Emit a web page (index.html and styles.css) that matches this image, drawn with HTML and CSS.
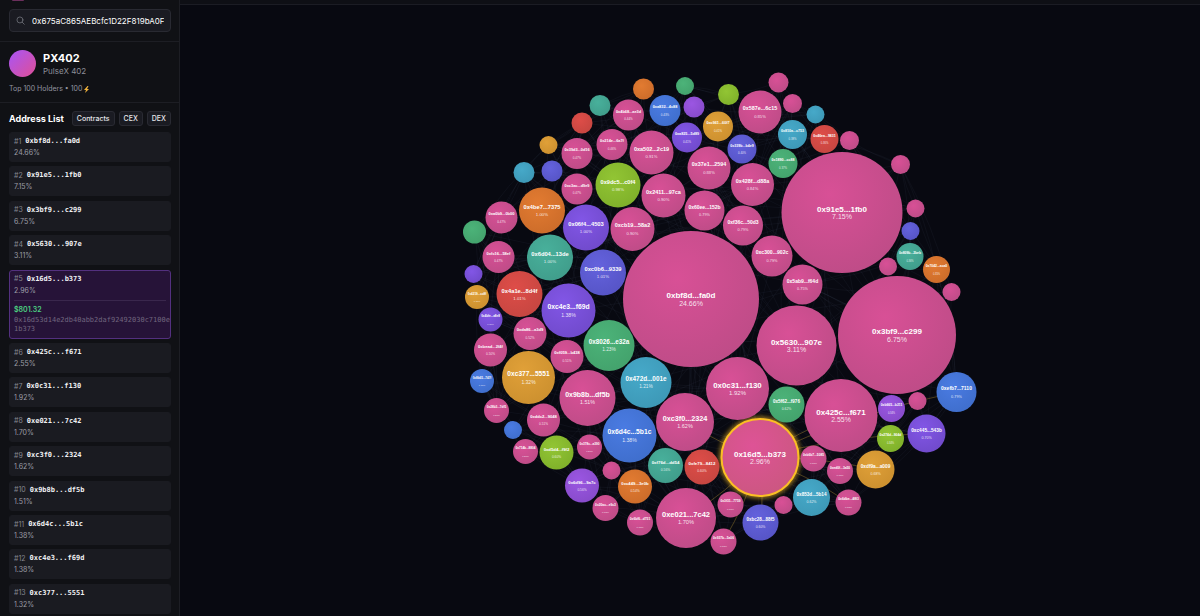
FILE: index.html
```html
<!DOCTYPE html>
<html lang="en">
<head>
<meta charset="utf-8">
<title>PX402 holders map</title>
<link rel="stylesheet" href="styles.css">
</head>
<body>
<aside class="sidebar">
  <div class="brand"><span class="brand-mark"></span></div>
  <div class="search-section">
    <label class="search">
      <svg class="search-icon" viewBox="0 0 24 24" aria-hidden="true"><circle cx="10.5" cy="10.5" r="8"/><path d="M16.5 16.5 22 22"/></svg>
      <input class="search-input" type="text" aria-label="Token address" value="0x675aC865AEBcfc1D22F819bA0Fe6A60bC17D3EB2">
    </label>
  </div>
  <section class="token">
    <div class="token-row">
      <span class="avatar"></span>
      <div>
        <h1 class="token-name">PX402</h1>
        <p class="token-sub">PulseX 402</p>
      </div>
    </div>
    <p class="token-meta">Top 100 Holders • 100
      <svg class="bolt" viewBox="0 0 12 14" aria-hidden="true"><path d="M8 0 1 8h4L3 14l8-8H7L10 0z"/></svg>
    </p>
  </section>
  <div class="list-head">
    <h2 class="list-title">Address List</h2>
    <button class="chip" type="button">Contracts</button>
    <button class="chip" type="button">CEX</button>
    <button class="chip" type="button">DEX</button>
  </div>
  <ol class="list">
    <li class="card"><div class="line"><span class="rank">#1</span><span class="addr">0xbf8d...fa0d</span></div><div class="share">24.66%</div></li>
    <li class="card"><div class="line"><span class="rank">#2</span><span class="addr">0x91e5...1fb0</span></div><div class="share">7.15%</div></li>
    <li class="card"><div class="line"><span class="rank">#3</span><span class="addr">0x3bf9...c299</span></div><div class="share">6.75%</div></li>
    <li class="card"><div class="line"><span class="rank">#4</span><span class="addr">0x5630...907e</span></div><div class="share">3.11%</div></li>
    <li class="card selected"><div class="line"><span class="rank">#5</span><span class="addr">0x16d5...b373</span></div><div class="share">2.96%</div>
      <div class="detail"><div class="usd">$801.32</div><div class="full">0x16d53d14e2db40abb2daf92492030c7100e1b373</div></div></li>
    <li class="card"><div class="line"><span class="rank">#6</span><span class="addr">0x425c...f671</span></div><div class="share">2.55%</div></li>
    <li class="card"><div class="line"><span class="rank">#7</span><span class="addr">0x0c31...f130</span></div><div class="share">1.92%</div></li>
    <li class="card"><div class="line"><span class="rank">#8</span><span class="addr">0xe021...7c42</span></div><div class="share">1.70%</div></li>
    <li class="card"><div class="line"><span class="rank">#9</span><span class="addr">0xc3f0...2324</span></div><div class="share">1.62%</div></li>
    <li class="card"><div class="line"><span class="rank">#10</span><span class="addr">0x9b8b...df5b</span></div><div class="share">1.51%</div></li>
    <li class="card"><div class="line"><span class="rank">#11</span><span class="addr">0x6d4c...5b1c</span></div><div class="share">1.38%</div></li>
    <li class="card"><div class="line"><span class="rank">#12</span><span class="addr">0xc4e3...f69d</span></div><div class="share">1.38%</div></li>
    <li class="card"><div class="line"><span class="rank">#13</span><span class="addr">0xc377...5551</span></div><div class="share">1.32%</div></li>
  </ol>
</aside>
<main class="stage">
  <div class="topbar"></div>
  <svg class="map" id="map" viewBox="180 5 1020 611" role="img" aria-label="Bubble map of token holders"></svg>
</main>
<script src="map.js"></script>
</body>
</html>
```
FILE: styles.css
```css
* { box-sizing: border-box; }
body {
  margin: 0;
  height: 100vh;
  display: flex;
  overflow: hidden;
  background: #080911;
  color: #fff;
  font-family: Inter, "Liberation Sans", sans-serif;
}
h1, h2, p, ol { margin: 0; padding: 0; }
.sidebar {
  flex: 0 0 180px;
  display: flex;
  flex-direction: column;
  background: #101115;
  border-right: 1px solid #1d1e24;
}
.brand { height: 1px; padding-left: 12px; }
.brand-mark { display: block; width: 12px; height: 1px; border-radius: 0 0 4px 4px; background: #6b2f5c; }
.search-section { padding: 8px 8px 9px 9px; border-bottom: 1px solid #1d1e24; }
.search {
  height: 23px;
  display: flex;
  align-items: center;
  gap: 7px;
  padding: 0 6px;
  background: #1a1b22;
  border: 1px solid #292a32;
  border-radius: 4px;
}
.search-icon { flex: none; width: 9px; height: 9px; fill: none; stroke: #777982; stroke-width: 2; stroke-linecap: round; }
.search-input {
  flex: 1;
  min-width: 0;
  padding: 0;
  border: 0;
  outline: 0;
  background: none;
  color: #fff;
  font: 400 8px/12px Inter, sans-serif;
}
.token { padding: 8px 9px 8px; border-bottom: 1px solid #1d1e24; }
.token-row { display: flex; align-items: center; gap: 7px; }
.avatar { width: 27px; height: 27px; border-radius: 50%; background: linear-gradient(135deg, #a855f7, #df4f96); }
.token-name { font-size: 11px; line-height: 14px; font-weight: 700; }
.token-sub { font-size: 8px; line-height: 12px; color: #8d8f98; }
.token-meta { display: flex; align-items: center; gap: 1px; margin-top: 7px; font-size: 7px; line-height: 10px; color: #9395a0; }
.bolt { width: 7px; height: 7px; fill: #f3b43c; }
.list-head { display: flex; align-items: center; gap: 4px; padding: 8px 8px 6px 9px; }
.list-title { flex: 1; white-space: nowrap; font-size: 9px; line-height: 15px; font-weight: 700; }
.chip {
  height: 15px;
  padding: 0 4px;
  border: 1px solid #292a32;
  border-radius: 3px;
  background: #1a1b22;
  color: #e6e6ea;
  font: 500 7px/12px Inter, sans-serif;
}
.list {
  flex: 1;
  min-height: 0;
  display: flex;
  flex-direction: column;
  justify-content: space-between;
  padding: 0 8px 2px 9px;
  list-style: none;
  overflow-y: auto;
  scrollbar-width: none;
}
.card {
  flex: none;
  padding: 2px 4px 3px;
  border: 1px solid #1a1b21;
  border-radius: 3px;
  background: #1a1b21;
}
.line { display: flex; align-items: center; gap: 4px; height: 12px; }
.rank { font-size: 7px; color: #858790; }
.addr { font: 700 7px/12px "DejaVu Sans Mono", monospace; color: #f1f1f4; }
.share { font-size: 7px; line-height: 11px; color: #9c9ea7; }
.selected { background: #261338; border-color: #53307f; }
.detail { margin-top: 4px; padding: 4px 0 1px; border-top: 1px solid #3a274d; }
.usd { font-size: 7px; line-height: 10px; font-weight: 600; color: #4cd080; }
.full { margin-right: -4px; font: 7px/9px "DejaVu Sans Mono", monospace; color: #71667f; word-break: break-all; padding-top: 1px; }
.stage { flex: 1; min-width: 0; display: flex; flex-direction: column; }
.topbar { height: 5px; flex: none; background: #0e0f15; border-bottom: 1px solid #1b1c24; }
.map { flex: 1; min-height: 0; width: 100%; font-family: "Liberation Sans", Arial, sans-serif; }
.link { fill: none; stroke: #7c8cb0; stroke-opacity: 0.06; }
.link-active { fill: none; stroke: #e8b83a; stroke-opacity: 0.3; }
.bubble-label { fill: #fff; font-weight: 700; text-anchor: middle; }
.bubble-share { fill: #fff; fill-opacity: 0.85; text-anchor: middle; }
.halo { fill: none; stroke: #fbbf24; stroke-opacity: 0.6; stroke-width: 5; filter: url(#glow); }
.ring { fill: none; stroke: #fbbf24; stroke-width: 2; }
```
FILE: map.js
```javascript
// [x, y, radius, colour, label, share]
const holders = [
  [760, 457.5, 38.5, "sel", "0x16d5...b373", "2.96%"],
  [691, 299, 68, "pink", "0xbf8d...fa0d", "24.66%"],
  [842, 212.5, 60.5, "pink", "0x91e5...1fb0", "7.15%"],
  [897, 335, 59, "pink", "0x3bf9...c299", "6.75%"],
  [796.5, 345.5, 40, "pink", "0x5630...907e", "3.11%"],
  [841, 415.5, 36.5, "pink", "0x425c...f671", "2.55%"],
  [737.5, 388.5, 31.5, "pink", "0x0c31...f130", "1.92%"],
  [686, 518, 30, "pink", "0xe021...7c42", "1.70%"],
  [685, 422, 29, "pink", "0xc3f0...2324", "1.62%"],
  [587.5, 398, 28, "pink", "0x9b8b...df5b", "1.51%"],
  [629.5, 435.5, 27, "blue", "0x6d4c...5b1c", "1.38%"],
  [568.5, 310.5, 27, "violet", "0xc4e3...f69d", "1.38%"],
  [528.5, 377.5, 26.5, "yellow", "0xc377...5551", "1.32%"],
  [609, 345.5, 25.5, "green", "0x8026...e32a", "1.23%"],
  [646, 382.5, 25.5, "cyan", "0x472d...001e", "1.21%"],
  [603, 272.5, 23, "indigo", "0xc0b6...9339", "1.01%"],
  [519.5, 294, 23, "red", "0x4a1e...8d4f", "1.01%"],
  [550, 257.5, 23, "teal", "0x6d04...13de", "1.00%"],
  [542, 210.5, 23, "orange", "0x4be7...7375", "1.00%"],
  [586, 227.5, 23, "violet", "0x06f4...4503", "1.00%"],
  [618, 185, 22.5, "lime", "0x9dc5...c0f4", "0.98%"],
  [651.5, 152.5, 22, "pink", "0xa502...2c19", "0.91%"],
  [663.5, 195.5, 22, "pink", "0x2411...97ca", "0.90%"],
  [632.5, 229, 22, "pink", "0xcb19...58a2", "0.90%"],
  [709, 168, 21.5, "pink", "0x37e1...2594", "0.88%"],
  [760, 112, 21.5, "pink", "0x587e...6c15", "0.85%"],
  [752.5, 184.5, 21.5, "pink", "0x428f...d88a", "0.84%"],
  [704.5, 210.5, 20, "pink", "0x60ee...152b", "0.79%"],
  [743, 225.5, 20, "pink", "0xf36c...50d3", "0.79%"],
  [772, 256, 20.5, "pink", "0xc300...902c", "0.79%"],
  [802.5, 284.5, 20, "pink", "0x5ab9...f64d", "0.75%"],
  [956.5, 392, 20, "blue", "0xefb7...7110", "0.79%"],
  [926.5, 433.5, 19, "violet", "0xc445...543b", "0.70%"],
  [875.5, 469.5, 19, "yellow", "0xdf9a...a009", "0.68%"],
  [811.5, 497.5, 18.5, "cyan", "0x853d...5b14", "0.62%"],
  [786.5, 404.5, 18, "green", "0x5f62...f976", "0.62%"],
  [760.5, 522.5, 18, "indigo", "0xbc28...88f5", "0.60%"],
  [702, 467, 17.5, "red", "0xfe79...8412", "0.60%"],
  [665.5, 465.5, 17.5, "teal", "0xf76d...dd54", "0.56%"],
  [635, 486.5, 17, "orange", "0xc449...3e0b", "0.54%"],
  [556.5, 452.5, 17, "lime", "0xd5d4...f9f2", "0.60%"],
  [582, 485.5, 17, "purple", "0x6d96...9a7c", "0.56%"],
  [543.5, 420, 16.5, "pink", "0xddc2...9048", "0.51%"],
  [567, 356.5, 16.5, "pink", "0xf059...b438", "0.51%"],
  [530, 333.5, 16.5, "pink", "0xda86...a3d9", "0.52%"],
  [490.5, 350, 16.5, "pink", "0xbead...2f4f", "0.50%"],
  [498.5, 257, 16, "pink", "0xfc16...58ef", "0.47%"],
  [501.5, 217.5, 16, "pink", "0xa0b9...0b00", "0.47%"],
  [577, 189, 15.5, "pink", "0xc3ac...d9e9", "0.47%"],
  [577, 153.5, 15.5, "pink", "0x39d3...0d16", "0.47%"],
  [612, 144.5, 15.5, "pink", "0x214e...6a7f", "0.46%"],
  [628.5, 115, 15.5, "pink", "0x4b68...ae3d", "0.44%"],
  [665, 110.5, 15.5, "blue", "0xa832...4c88", "0.43%"],
  [718, 126.5, 15, "yellow", "0xc961...60f7", "0.41%"],
  [687, 137.5, 15, "violet", "0xa825...5d89", "0.41%"],
  [742, 149, 14.5, "indigo", "0x339b...b4e9", "0.40%"],
  [792.5, 134.5, 14.5, "cyan", "0x810a...c753", "0.38%"],
  [783, 163.5, 14.5, "green", "0x1890...cc88", "0.37%"],
  [824.5, 139, 14, "red", "0x46ea...9831", "0.36%"],
  [910, 256.5, 13.5, "teal", "0x809b...2beb", "0.36%"],
  [936.5, 269.5, 13.5, "orange", "0x7042...aca0", "0.35%"],
  [477, 297, 12, "yellow", "0x4219...cc8f", "0.30%"],
  [490.5, 319.5, 12, "violet", "0x4bfe...a8e8", "0.30%"],
  [482, 381, 12, "blue", "0x8b65...747f", "0.30%"],
  [496.5, 410.5, 12.5, "pink", "0x28b3...7df5", "0.31%"],
  [525.5, 451.5, 12.5, "pink", "0x714b...8804", "0.30%"],
  [589.5, 447, 12.5, "pink", "0x378c...a390", "0.31%"],
  [605.5, 508, 13, "pink", "0x20ac...e9c3", "0.33%"],
  [640, 522.5, 13, "pink", "0x6bf6...d751", "0.33%"],
  [730.5, 504.5, 13, "pink", "0x3f31...7759", "0.31%"],
  [723.5, 541.5, 13, "pink", "0x937b...5a06", "0.33%"],
  [813.5, 458.5, 13, "pink", "0xb6b7...5085", "0.31%"],
  [840, 471, 13, "pink", "0xed0f...3a50", "0.33%"],
  [848.5, 502.5, 13, "pink", "0x6dbe...4f83", "0.33%"],
  [890.5, 438.5, 13.5, "lime", "0x274d...904d", "0.34%"],
  [891.5, 408.5, 13.5, "purple", "0xb665...b211", "0.34%"],
  [643.5, 89, 10.5, "orange"], [600, 105.5, 10.5, "teal"], [582, 123, 10.5, "red"],
  [548.5, 145, 9, "yellow"], [524, 172.5, 10.5, "cyan"], [552, 171, 10.5, "indigo"],
  [474.5, 232, 11.5, "green"], [473.5, 274, 9, "violet"], [685, 86, 9, "green"],
  [728.5, 94.5, 10.5, "lime"], [778.5, 82.5, 10, "pink"], [792.5, 103.5, 9.5, "pink"],
  [694, 107, 10.5, "purple"], [815.5, 114.5, 9, "cyan"], [849.5, 140.5, 9.5, "pink"],
  [900.5, 164.5, 9.5, "pink"], [915.5, 208.5, 9, "pink"], [910.5, 231, 9, "indigo"],
  [888, 266.5, 9, "pink"], [951.5, 292, 9, "pink"], [917.5, 401, 9, "pink"],
  [783.5, 505, 9, "pink"], [611.5, 470.5, 9, "pink"], [513, 430, 9, "blue"]
];

const tints = {
  sel: ["#de5396", "#cb5780"],
  pink: ["#d85096", "#be4c87"],
  orange: ["#e27b31", "#cc6c2a"],
  red: ["#de4d48", "#c64641"],
  yellow: ["#e0a038", "#cc902f"],
  lime: ["#92c534", "#7fb02a"],
  green: ["#4cb379", "#43a26c"],
  teal: ["#48b09b", "#409d8b"],
  cyan: ["#46a9c9", "#3d98b6"],
  blue: ["#4a7be2", "#3f6ecc"],
  indigo: ["#6462dd", "#5654c6"],
  violet: ["#8256e6", "#704acb"],
  purple: ["#9b56e2", "#874bca"]
};

const NS = "http://www.w3.org/2000/svg";
const map = document.getElementById("map");

function add(parent, name, attrs, text) {
  const el = document.createElementNS(NS, name);
  for (const key in attrs) el.setAttribute(key, attrs[key]);
  if (text) el.textContent = text;
  parent.appendChild(el);
  return el;
}

const defs = add(map, "defs", {});
for (const name in tints) {
  const g = add(defs, "radialGradient", { id: "tint-" + name, cx: "40%", cy: "35%", r: "70%" });
  add(g, "stop", { offset: "0", "stop-color": tints[name][0] });
  add(g, "stop", { offset: "1", "stop-color": tints[name][1] });
}
const glow = add(defs, "filter", { id: "glow", x: "-20%", y: "-20%", width: "140%", height: "140%" });
add(glow, "feGaussianBlur", { stdDeviation: 2 });

function link(a, b, cls) {
  const mx = (a[0] + b[0]) / 2 + (b[1] - a[1]) * 0.06;
  const my = (a[1] + b[1]) / 2 - (b[0] - a[0]) * 0.06;
  add(map, "path", { class: cls, d: `M${a[0]} ${a[1]}Q${mx} ${my} ${b[0]} ${b[1]}` });
}

// Nearby holders, plus a few transfers across the map
holders.forEach((a, i) => {
  const near = holders
    .filter((b) => b !== a)
    .sort((b, c) => Math.hypot(b[0] - a[0], b[1] - a[1]) - Math.hypot(c[0] - a[0], c[1] - a[1]));
  [1, 3, 5, 8, 12].forEach((k) => link(a, near[k], "link"));
  link(a, holders[(i * 7 + 11) % holders.length], "link");
  link(a, holders[i % 9], "link");
});
[5, 8, 7, 33, 36, 70, 73, 32, 31].forEach((i) => link(holders[0], holders[i], "link-active"));

holders.forEach(([x, y, r, tint, label, share]) => {
  if (tint === "sel") add(map, "circle", { class: "halo", cx: x, cy: y, r });
  add(map, "circle", { cx: x, cy: y, r, fill: `url(#tint-${tint})` });
  if (tint === "sel") add(map, "circle", { class: "ring", cx: x, cy: y, r });
  if (!label) return;
  const big = Math.min(8, r / 4);
  const small = Math.min(7, r * 0.19);
  add(map, "text", { class: "bubble-label", x, y: y - 3.5 + big * 0.36, "font-size": big }, label);
  add(map, "text", { class: "bubble-share", x, y: y + 4.2 + small * 0.36, "font-size": small }, share);
});
```
